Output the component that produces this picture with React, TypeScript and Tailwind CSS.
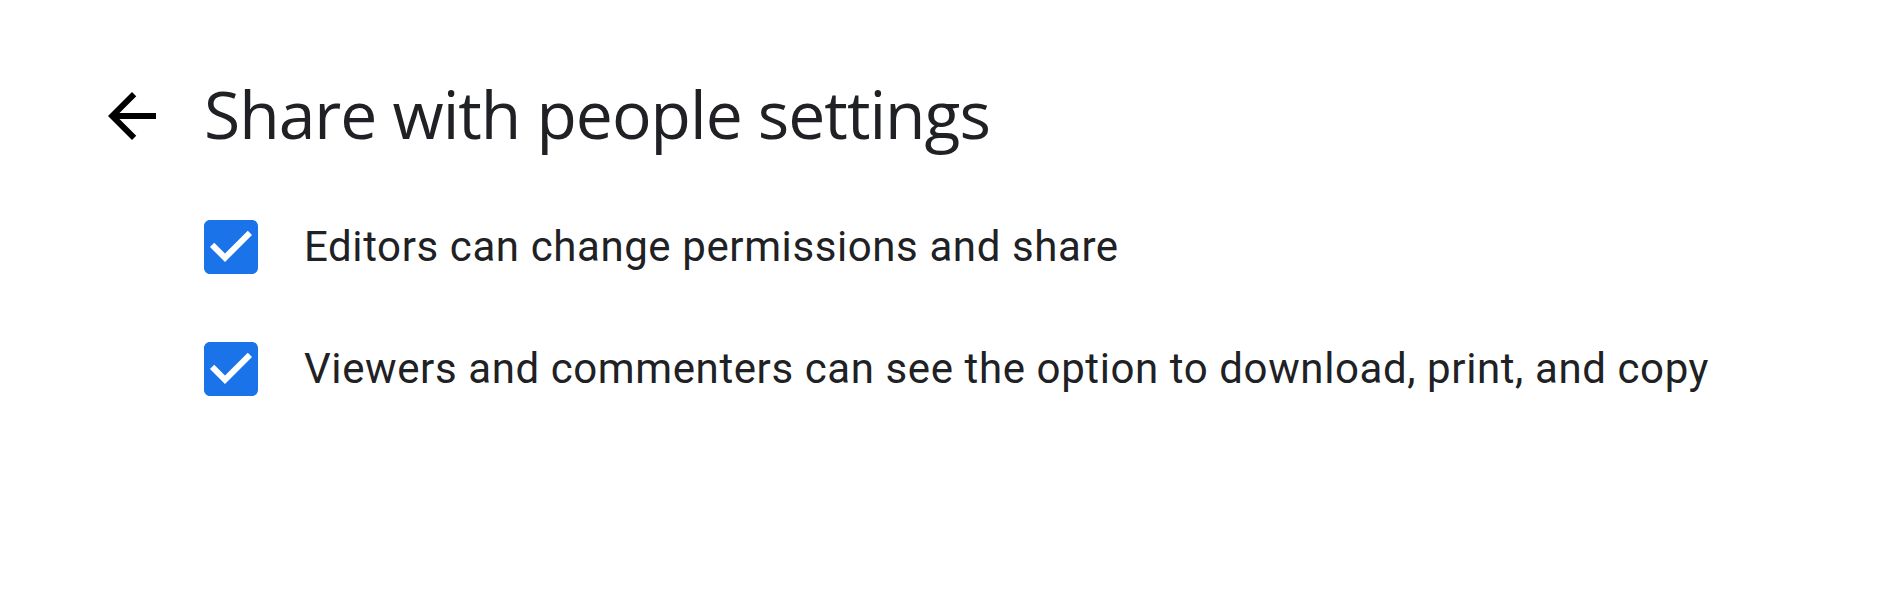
import React, { useState } from 'react';

function BackArrow() {
  return (
    <svg viewBox="0 0 24 24" className="w-[72px] h-[72px] shrink-0" fill="#000">
      <path d="M20 11H7.83l5.59-5.59L12 4l-8 8 8 8 1.41-1.41L7.83 13H20v-2z" />
    </svg>
  );
}

function CheckRow({ label, checked, onToggle }: { label: string; checked: boolean; onToggle: () => void }) {
  return (
    <label className="flex items-center h-[54px] cursor-pointer" onClick={onToggle}>
      {checked ? (
        <svg viewBox="3 3 18 18" className="w-[54px] h-[54px] shrink-0" fill="#1a73e8">
          <path d="M19 3H5c-1.11 0-2 .9-2 2v14c0 1.1.89 2 2 2h14c1.11 0 2-.9 2-2V5c0-1.1-.89-2-2-2zm-9 14l-5-5 1.41-1.41L10 14.17l7.59-7.59L19 8l-9 9z" />
        </svg>
      ) : (
        <span className="w-[54px] h-[54px] shrink-0 rounded-[6px] border-[6px] border-[#5f6368] bg-white" />
      )}
      <span className="ml-[46px] text-[42px] leading-[54px] text-[#202124] tracking-[0.6px] whitespace-nowrap font-['Roboto',sans-serif]">
        {label}
      </span>
    </label>
  );
}

export default function App() {
  const [editors, setEditors] = useState(true);
  const [viewers, setViewers] = useState(true);

  return (
    <div className="w-[1896px] h-[615px] bg-white pt-[80px] pl-[96px]">
      <div className="flex items-start h-[72px]">
        <BackArrow />
        <h1 className="ml-[36px] text-[66px] leading-[67px] text-[#202124] font-normal tracking-[-1px] whitespace-nowrap font-['Open_Sans',sans-serif]">
          Share with people settings
        </h1>
      </div>
      <div className="ml-[108px] mt-[68px] flex flex-col gap-[68px]">
        <CheckRow label="Editors can change permissions and share" checked={editors} onToggle={() => setEditors(!editors)} />
        <CheckRow
          label="Viewers and commenters can see the option to download, print, and copy"
          checked={viewers}
          onToggle={() => setViewers(!viewers)}
        />
      </div>
    </div>
  );
}
